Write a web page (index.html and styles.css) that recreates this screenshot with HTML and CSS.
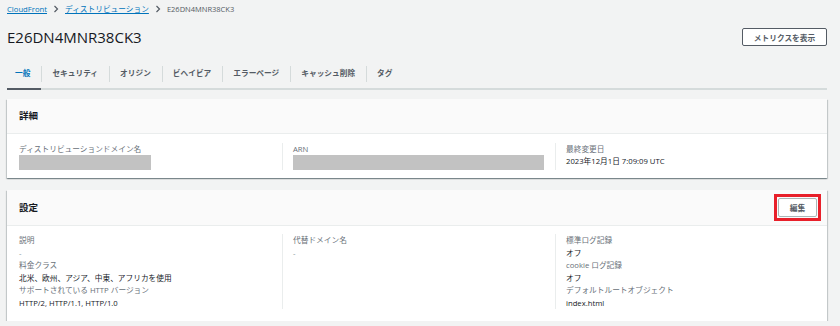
FILE: index.html
```html
<!DOCTYPE html>
<html lang="ja">
<head>
  <meta charset="UTF-8" />
  <title>E26DN4MNR38CK3 | CloudFront</title>
  <link rel="stylesheet" href="styles.css">
</head>
<body>
  <div class="page">
    <nav class="crumbs">
      <a href="#">CloudFront</a>
      <svg class="chev" width="6" height="8" viewBox="0 0 6 8"><polyline points="1.5,1 4.5,4 1.5,7" /></svg>
      <a href="#">ディストリビューション</a>
      <svg class="chev" width="6" height="8" viewBox="0 0 6 8"><polyline points="1.5,1 4.5,4 1.5,7" /></svg>
      <span class="current">E26DN4MNR38CK3</span>
    </nav>

    <div class="head">
      <h1>E26DN4MNR38CK3</h1>
      <button class="btn">メトリクスを表示</button>
    </div>

    <ul class="tabs">
      <li class="active">一般</li>
      <li>セキュリティ</li>
      <li>オリジン</li>
      <li>ビヘイビア</li>
      <li>エラーページ</li>
      <li>キャッシュ削除</li>
      <li>タグ</li>
    </ul>

    <section class="panel">
      <div class="panel-head">
        <h2>詳細</h2>
      </div>
      <div class="panel-body cols details">
        <div class="col">
          <div class="label">ディストリビューションドメイン名</div>
          <div class="masked masked-domain"></div>
        </div>
        <div class="col">
          <div class="label">ARN</div>
          <div class="masked masked-arn"></div>
        </div>
        <div class="col">
          <div class="label">最終変更日</div>
          <div class="value">2023年12月1日 7:09:09 UTC</div>
        </div>
      </div>
    </section>

    <section class="panel">
      <div class="panel-head">
        <h2>設定</h2>
        <span class="highlight"><button class="btn btn-small">編集</button></span>
      </div>
      <div class="panel-body cols settings">
        <div class="col">
          <div class="label">説明</div>
          <div class="value empty">-</div>
          <div class="label">料金クラス</div>
          <div class="value">北米、欧州、アジア、中東、アフリカを使用</div>
          <div class="label">サポートされている HTTP バージョン</div>
          <div class="value">HTTP/2, HTTP/1.1, HTTP/1.0</div>
        </div>
        <div class="col">
          <div class="label">代替ドメイン名</div>
          <div class="value empty">-</div>
        </div>
        <div class="col">
          <div class="label">標準ログ記録</div>
          <div class="value">オフ</div>
          <div class="label">cookie ログ記録</div>
          <div class="value">オフ</div>
          <div class="label">デフォルトルートオブジェクト</div>
          <div class="value">index.html</div>
        </div>
      </div>
    </section>
  </div>
</body>
</html>
```

FILE: styles.css
```css
:root {
  --bg: #f2f3f3;
  --text: #16191f;
  --muted: #687078;
  --link: #0073bb;
  --line: #eaeded;
  --tab-line: #d5dbdb;
}

* {
  box-sizing: border-box;
}

body {
  margin: 0;
  background: var(--bg);
  color: var(--text);
  font-family: "Open Sans", "Noto Sans CJK JP", sans-serif;
  font-size: 7.7px;
}

.page {
  padding: 3px 13px 0 7px;
}

/* breadcrumb */
.crumbs {
  display: flex;
  align-items: center;
  gap: 5px;
  height: 12px;
  line-height: 12px;
}

.crumbs a {
  color: var(--link);
  text-decoration: underline;
  text-underline-offset: 1px;
}

.crumbs .chev {
  margin: 0 1px;
}

.crumbs .chev polyline {
  fill: none;
  stroke: #545b64;
  stroke-width: 1.2;
}

.crumbs .current {
  color: #545b64;
  font-size: 7.5px;
}

/* page heading */
.head {
  display: flex;
  justify-content: space-between;
  align-items: center;
  margin-top: 13px;
  height: 18px;
}

.head h1 {
  margin: 0;
  font-size: 15px;
  font-weight: 400;
  line-height: 18px;
}

.btn {
  font-family: inherit;
  font-size: 7.7px;
  font-weight: 700;
  color: #545b64;
  background: #fff;
  border: 1px solid #545b64;
  border-radius: 2px;
  height: 18px;
  width: 85px;
  padding: 0;
  cursor: pointer;
}

.btn-small {
  display: block;
  width: 39px;
  height: 19px;
  border-color: #aab7b8;
}

.highlight {
  display: block;
  padding: 1px;
  border: 3px solid #e8202a;
  margin-right: -4px;
}

/* tabs */
.tabs {
  display: flex;
  list-style: none;
  margin: 12px 0 0;
  padding: 0;
  border-bottom: 2px solid var(--tab-line);
}

.tabs li {
  position: relative;
  padding: 7px 11px;
  line-height: 16px;
  color: #545b64;
  font-weight: 700;
}

.tabs li:first-child {
  padding-left: 8px;
  padding-right: 11px;
}

.tabs li + li::before {
  content: "";
  position: absolute;
  left: 0;
  top: 8px;
  height: 16px;
  border-left: 1px solid var(--tab-line);
}

.tabs li.active {
  color: var(--link);
}

.tabs li.active::after {
  content: "";
  position: absolute;
  left: 0;
  right: 0;
  bottom: -2px;
  height: 2px;
  background: #545b64;
}

/* panels */
.panel {
  background: #fff;
  margin-top: 9px;
  box-shadow: 0 1px 1px 0 rgba(0, 28, 36, 0.3), 1px 1px 1px 0 rgba(0, 28, 36, 0.15), -1px 1px 1px 0 rgba(0, 28, 36, 0.15);
}

.panel + .panel {
  margin-top: 12px;
}

.panel-head {
  display: flex;
  justify-content: space-between;
  align-items: center;
  height: 35px;
  padding: 0 10px 0 12px;
  background: #fafafa;
  border-bottom: 1px solid var(--line);
}

.panel + .panel .panel-head {
  height: 36px;
}

.panel-head h2 {
  margin: 0 0 2px;
  font-size: 9.5px;
  font-weight: 700;
}

.panel-body {
  padding: 9px 12px 8px;
}

.cols {
  display: grid;
  grid-template-columns: 263px 273px 1fr;
}

.cols .col + .col {
  border-left: 1px solid var(--line);
  padding-left: 10px;
}

.label {
  color: var(--muted);
  line-height: 12px;
}

.value {
  line-height: 13px;
}

.value.empty {
  color: #879596;
}

.masked {
  height: 15px;
  background: #c2c2c2;
}

.masked-domain {
  width: 132px;
}

.masked-arn {
  width: 251px;
}

.settings {
  padding: 8px 12px 12px;
}

.settings .label,
.settings .value {
  line-height: 12.5px;
}
```
